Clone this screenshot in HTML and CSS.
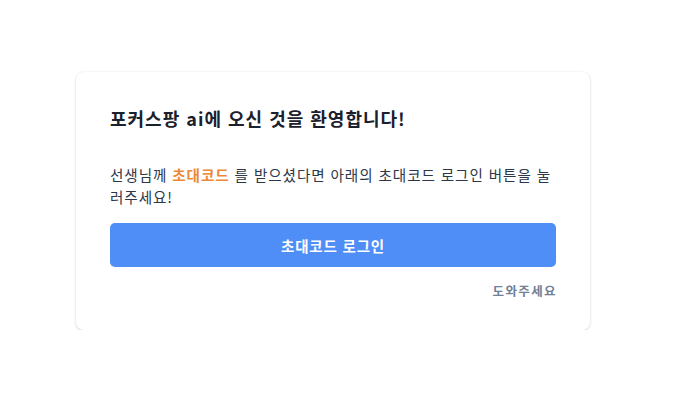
FILE: index.html
```html
<!DOCTYPE html>
<html lang="ko">
<head>
<meta charset="utf-8">
<link rel="stylesheet" href="styles.css">
</head>
<body>
<main class="page">
  <section class="card">
    <h1 class="title">포커스팡 ai에 오신 것을 환영합니다!</h1>
    <p class="desc">선생님께 <strong class="accent">초대코드</strong> 를 받으셨다면 아래의 초대코드 로그인 버튼을 눌러주세요!</p>
    <button class="btn" type="button">초대코드 로그인</button>
    <div class="help-row"><a class="help" href="#">도와주세요</a></div>
  </section>
</main>
</body>
</html>
```

FILE: styles.css
```css
* { box-sizing: border-box; }
html, body { margin: 0; padding: 0; background: #ffffff; }
body {
  font-family: "Noto Sans CJK KR", "Noto Sans", sans-serif;
  color: #2d3748;
}
.page {
  padding: 72px 0 0 76px;
}
.card {
  width: 514px;
  height: 258px;
  padding: 32px 34px 0 34px;
  background: #fff;
  border-radius: 8px;
  box-shadow: 0 1px 3px rgba(0,0,0,0.14), 0 0 2px rgba(0,0,0,0.06);
}
.title {
  margin: 0;
  font-size: 18px;
  line-height: 28px;
  font-weight: 700;
  letter-spacing: 1px;
  color: #1a202c;
}
.desc {
  margin: 32px 0 0 0;
  font-size: 14.6px;
  line-height: 22px;
  letter-spacing: 0.9px;
  color: #2d3748;
}
.accent {
  color: #ed8936;
  font-weight: 700;
}
.btn {
  display: block;
  width: 100%;
  height: 44px;
  margin-top: 15px;
  border: 0;
  border-radius: 5px;
  background: #4f8ef7;
  color: #fff;
  font-family: inherit;
  font-size: 14.5px;
  font-weight: 700;
  letter-spacing: 0.8px;
}
.help-row {
  display: flex;
  justify-content: flex-end;
  margin-top: 14px;
}
.help {
  font-size: 12.5px;
  line-height: 20px;
  font-weight: 700;
  letter-spacing: 1.4px;
  margin-right: -1px;
  color: #718096;
  text-decoration: none;
}
```
